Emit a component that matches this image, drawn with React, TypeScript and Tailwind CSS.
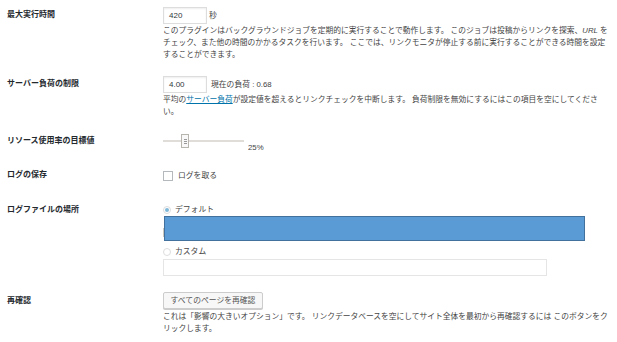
import React from "react";

const font = { fontFamily: '"Liberation Sans", "Noto Sans CJK JP", sans-serif' };

function Label({ children, pt }: { children: React.ReactNode; pt: string }) {
  return (
    <div className={`w-[163px] shrink-0 pl-[7px] text-[8px] font-bold text-[#23282d] leading-[12px] ${pt}`}>
      {children}
    </div>
  );
}

export default function App() {
  return (
    <div className="w-[617px] h-[342px] bg-white overflow-hidden text-[#444]" style={font}>
      {/* Row 1 */}
      <div className="flex pt-[7px]">
        <Label pt="pt-[2px]">最大実行時間</Label>
        <div className="flex flex-col">
          <div className="flex items-center gap-[2px]">
            <div className="w-[44px] h-[17px] border border-[#ddd] shadow-[inset_0_1px_2px_rgba(0,0,0,0.07)] text-[8px] text-[#32373c] pl-[5px] flex items-center">420</div>
            <span className="text-[7.8px]">秒</span>
          </div>
          <div className="text-[7.75px] leading-[12px] whitespace-nowrap mt-[1px]">
            <div>このプラグインはバックグラウンドジョブを定期的に実行することで動作します。 このジョブは投稿からリンクを探索、<i>URL</i> を</div>
            <div>チェック、また他の時間のかかるタスクを行います。 ここでは、リンクモニタが停止する前に実行することができる時間を設定</div>
            <div>することができます。</div>
          </div>
        </div>
      </div>

      {/* Row 2 */}
      <div className="flex pt-[15px]">
        <Label pt="pt-[2px]">サーバー負荷の制限</Label>
        <div className="flex flex-col">
          <div className="flex items-center gap-[4px]">
            <div className="w-[44px] h-[17px] border border-[#ddd] shadow-[inset_0_1px_2px_rgba(0,0,0,0.07)] text-[8px] text-[#32373c] pl-[5px] flex items-center">4.00</div>
            <span className="text-[7.8px]">現在の負荷 : 0.68</span>
          </div>
          <div className="text-[7.75px] leading-[12px] whitespace-nowrap mt-[1px]">
            <div>平均の<span className="text-[#0073aa] underline">サーバー負荷</span>が設定値を超えるとリンクチェックを中断します。 負荷制限を無効にするにはこの項目を空にしてくださ</div>
            <div>い。</div>
          </div>
        </div>
      </div>

      {/* Row 3 slider */}
      <div className="flex pt-[15px]">
        <Label pt="pt-[2px]">リソース使用率の目標値</Label>
        <div className="flex items-start">
          <div className="relative w-[81px] h-[14px] mt-[1px]">
            <div className="absolute left-0 right-0 top-[6px] h-[2px] bg-[#e0ddd8]" />
            <div className="absolute left-[18px] top-0 w-[8px] h-[14px] border border-[#b8b4ae] bg-[#f8f8f8] flex flex-col items-center justify-center gap-[1px]">
              <div className="w-[3px] h-[1px] bg-[#999]" />
              <div className="w-[3px] h-[1px] bg-[#999]" />
              <div className="w-[3px] h-[1px] bg-[#999]" />
            </div>
          </div>
          <span className="text-[7.8px] ml-[4px] mt-[9px] leading-[12px]">25%</span>
        </div>
      </div>

      {/* Row 4 checkbox */}
      <div className="flex pt-[14px]">
        <Label pt="pt-[1px]">ログの保存</Label>
        <div className="flex items-center gap-[5px] mt-[2px]">
          <div className="w-[10px] h-[10px] border border-[#b4b9be] bg-white" />
          <span className="text-[7.8px] leading-[12px]">ログを取る</span>
        </div>
      </div>

      {/* Row 5 radios */}
      <div className="flex pt-[21px]">
        <Label pt="pt-[1px]">ログファイルの場所</Label>
        <div className="flex flex-col">
          <div className="flex items-center gap-[4px] mt-[1px]">
            <div className="w-[8px] h-[8px] rounded-full border border-[#ddd] flex items-center justify-center">
              <div className="w-[4px] h-[4px] rounded-full bg-[#7fb8d9]" />
            </div>
            <span className="text-[7.8px] leading-[12px]">デフォルト</span>
          </div>
          <div className="relative h-[30px]">
            <div className="absolute left-0 top-[12px] w-[20px] h-[9px] bg-[#ccc8c0]" />
            <div className="absolute left-[1px] top-0 w-[421px] h-[25px] bg-[#5b9bd5] border border-[#41719c]" />
          </div>
          <div className="flex items-center gap-[4px]">
            <div className="w-[8px] h-[8px] rounded-full border border-[#ddd]" />
            <span className="text-[7.8px] leading-[12px]">カスタム</span>
          </div>
          <div className="w-[384px] h-[17px] border border-[#e5e5e5] mt-[1px]" />
        </div>
      </div>

      {/* Row 6 button */}
      <div className="flex pt-[16px]">
        <Label pt="pt-[3px]">再確認</Label>
        <div className="flex flex-col">
          <div className="w-[100px] h-[17px] border border-[#ccc] rounded-[2px] bg-[#f7f7f7] text-[7.8px] text-[#555] flex items-center justify-center shadow-[0_1px_0_#ccc]">
            すべてのページを再確認
          </div>
          <div className="text-[7.75px] leading-[12px] whitespace-nowrap mt-[2px]">
            <div>これは「影響の大きいオプション」です。 リンクデータベースを空にしてサイト全体を最初から再確認するには このボタンをク</div>
            <div>リックします。</div>
          </div>
        </div>
      </div>
    </div>
  );
}
